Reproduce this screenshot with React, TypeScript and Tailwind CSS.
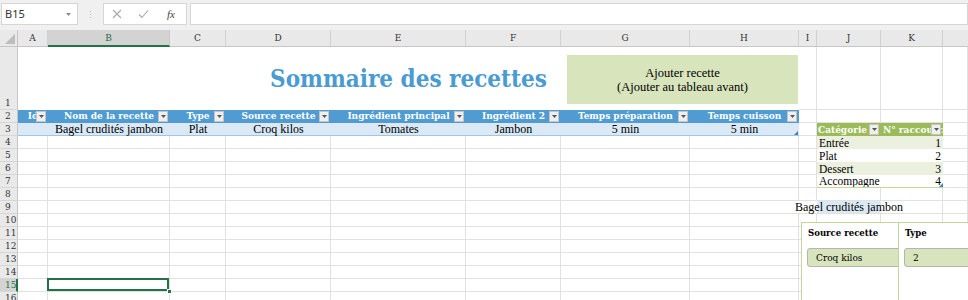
import React from "react";

const SLAB = "font-['DejaVu_Serif_Condensed','DejaVu_Serif',serif]";
const BODY = "font-['Liberation_Serif','Times_New_Roman',serif]";

function FilterBtn() {
  return (
    <div className="absolute right-[2px] top-[1px] flex h-[11px] w-[10px] items-center justify-center border border-[#c4c4c4] bg-[#efefef]">
      <svg width="5" height="3" viewBox="0 0 5 3">
        <path d="M0 0h5L2.5 3z" fill="#555" />
      </svg>
    </div>
  );
}

function RH({ n, active }: { n: number; active?: boolean }) {
  return (
    <div
      className={
        active
          ? `flex items-end pb-[0px] pl-[5px] border-b border-[#d6d6d6] border-r-2 border-r-[#217346] bg-[#d3d3d3] text-[10px] leading-[12px] text-[#217346] ${SLAB}`
          : `flex items-end pb-[0px] pl-[5px] border-b border-[#d6d6d6] border-r border-r-[#c6c6c6] bg-[#e9e9e9] text-[10px] leading-[12px] text-[#333] ${SLAB}`
      }
    >
      {n}
    </div>
  );
}

function C({ className = "", children }: { className?: string; children?: React.ReactNode }) {
  return <div className={"border-r border-b border-[#e1e1e1] " + className}>{children}</div>;
}

function TH({ label }: { label: string }) {
  return (
    <div className={`relative flex items-end justify-center overflow-hidden bg-[#4f9bd2] pb-[1px] text-[10px] font-bold leading-[12px] text-white ${SLAB}`}>
      <span className="whitespace-nowrap">{label}</span>
      <FilterBtn />
    </div>
  );
}

function TD({ label, handle }: { label?: string; handle?: boolean }) {
  return (
    <div className={`relative flex items-end justify-center overflow-visible border-b border-[#9fc5e8] bg-[#dae9f5] text-[12px] leading-[12px] text-black ${BODY}`}>
      <span className="whitespace-nowrap">{label}</span>
      {handle && (
        <svg className="absolute bottom-[0px] right-[1px]" width="4" height="4" viewBox="0 0 4 4">
          <path d="M4 0V4H0z" fill="#3b7fc4" />
        </svg>
      )}
    </div>
  );
}

function Letters() {
  const letters = ["A", "B", "C", "D", "E", "F", "G", "H", "I", "J", "K"];
  return (
    <>
      <div className="relative border-r border-b border-[#c6c6c6] bg-[#e9e9e9]">
        <svg className="absolute bottom-[2px] right-[2px]" width="10" height="10" viewBox="0 0 10 10">
          <path d="M10 0V10H0z" fill="#bdbdbd" />
        </svg>
      </div>
      {letters.map((l) =>
        l === "B" ? (
          <div
            key={l}
            className={`flex items-end justify-center border-r border-[#c9c9c9] border-b-2 border-b-[#217346] bg-[#d3d3d3] pb-[1px] text-[10px] leading-[12px] text-[#1f6a40] ${SLAB}`}
          >
            {l}
          </div>
        ) : (
          <div
            key={l}
            className={`flex items-end justify-center border-r border-[#d0d0d0] border-b border-b-[#c6c6c6] bg-[#e9e9e9] pb-[2px] text-[10px] leading-[12px] text-[#333] ${SLAB}`}
          >
            {l}
          </div>
        )
      )}
      <div className="border-b border-[#c6c6c6] bg-[#e9e9e9]" />
    </>
  );
}

function NormalRow({ n, active }: { n: number; active?: boolean }) {
  return (
    <>
      <RH n={n} active={active} />
      <C />
      {active ? (
        <div className="relative border-r border-b border-[#e1e1e1]">
          <div className="absolute -left-[1px] -top-[1px] -right-[0px] -bottom-[0px] border-2 border-[#217346]" />
          <div className="absolute -bottom-[3px] -right-[3px] h-[5px] w-[5px] border border-white bg-[#217346]" />
        </div>
      ) : (
        <C />
      )}
      <C />
      <C />
      <C />
      <C />
      <C />
      <C />
      <C />
      <C />
      <C />
      <C />
    </>
  );
}

const cats: [string, number][] = [
  ["Entrée", 1],
  ["Plat", 2],
  ["Dessert", 3],
  ["Accompagne", 4],
];

export default function App() {
  return (
    <div className="relative h-[300px] w-[968px] overflow-hidden bg-white">
      {/* Formula bar */}
      <div className="flex h-[30px] items-start gap-0 bg-[#f0f0f0] pt-[3px]">
        <div className="ml-[1px] flex h-[22px] w-[77px] items-center justify-between border border-[#d6d6d6] bg-white pl-[3px] pr-[6px] font-['Noto_Sans','Open_Sans',sans-serif] text-[11px] text-[#333]">
          <span>B15</span>
          <svg width="5" height="3" viewBox="0 0 5 3">
            <path d="M0 0h5L2.5 3z" fill="#8a8a8a" />
          </svg>
        </div>
        <div className="flex h-[22px] w-[25px] flex-col items-center justify-center gap-[2px]">
          <div className="h-[1px] w-[1px] bg-[#b5b5b5]" />
          <div className="h-[1px] w-[1px] bg-[#b5b5b5]" />
          <div className="h-[1px] w-[1px] bg-[#b5b5b5]" />
        </div>
        <div className="flex h-[22px] w-[84px] items-center border border-[#d6d6d6] bg-white">
          <svg className="ml-[8px]" width="10" height="10" viewBox="0 0 10 10">
            <path d="M1 1L9 9M9 1L1 9" stroke="#a9a9a9" strokeWidth="1.1" />
          </svg>
          <svg className="ml-[16px]" width="11" height="10" viewBox="0 0 11 10">
            <path d="M1 5.5L4 8.5L10 1.5" stroke="#a9a9a9" strokeWidth="1.1" fill="none" />
          </svg>
          <span className={`ml-[18px] text-[11px] italic text-[#444] ${BODY}`}>fx</span>
        </div>
        <div className="ml-[3px] h-[22px] flex-1 border border-[#d6d6d6] bg-white" />
      </div>

      {/* Sheet grid */}
      <div className="grid grid-cols-[18px_30px_122px_56px_105px_135px_95px_129px_109px_18px_64px_62px_1fr] grid-rows-[17px_63px_repeat(15,13px)]">
        <Letters />

        {/* Row 1 */}
        <RH n={1} />
        <div className="relative col-span-8 flex items-center justify-center">
          <span className={`pt-[1px] text-[24px] font-bold text-[#4a9bd1] ${SLAB}`}>Sommaire des recettes</span>
          <div className={`absolute left-[549px] top-[8px] flex h-[49px] w-[231px] flex-col items-center justify-center bg-[#d8e4bc] text-[12.5px] leading-[14px] text-black ${BODY}`}>
            <span>Ajouter recette</span>
            <span>(Ajouter au tableau avant)</span>
          </div>
        </div>
        <C />
        <C />
        <C />
        <C />

        {/* Row 2 */}
        <RH n={2} />
        <TH label="Id" />
        <TH label="Nom de la recette" />
        <TH label="Type" />
        <TH label="Source recette" />
        <TH label="Ingrédient principal" />
        <TH label="Ingrédient 2" />
        <TH label="Temps préparation" />
        <TH label="Temps cuisson" />
        <C />
        <C />
        <C />
        <C />

        {/* Row 3 */}
        <RH n={3} />
        <TD />
        <TD label="Bagel crudités jambon" />
        <TD label="Plat" />
        <TD label="Croq kilos" />
        <TD label="Tomates" />
        <TD label="Jambon" />
        <TD label="5 min" />
        <TD label="5 min" handle />
        <C />
        <div className={`relative flex items-end overflow-hidden bg-[#9bbb59] pl-[1px] text-[10px] font-bold leading-[12px] text-white ${SLAB}`}>
          <span className="whitespace-nowrap">Catégorie</span>
          <FilterBtn />
        </div>
        <div className={`relative flex items-end overflow-hidden bg-[#9bbb59] pl-[2px] text-[10px] font-bold leading-[12px] text-white ${SLAB}`}>
          <span className="whitespace-nowrap">N° raccourci</span>
          <FilterBtn />
        </div>
        <C />

        {/* Rows 4-7 */}
        {cats.map(([name, num], i) => (
          <React.Fragment key={name}>
            <RH n={4 + i} />
            <C />
            <C />
            <C />
            <C />
            <C />
            <C />
            <C />
            <C />
            <C />
            <div
              className={
                (i % 2 === 0 ? "bg-[#ebf1de] " : "bg-white ") +
                (i === 3 ? "border-b border-[#c4d79b] " : "") +
                `flex items-end overflow-hidden whitespace-nowrap pl-[2px] text-[11.5px] leading-[12px] text-black ${BODY}`
              }
            >
              {name}
            </div>
            <div
              className={
                (i % 2 === 0 ? "bg-[#ebf1de] " : "bg-white ") +
                (i === 3 ? "border-b border-[#c4d79b] " : "") +
                `relative flex items-end justify-end pr-[2px] text-[11.5px] leading-[12px] text-black ${BODY}`
              }
            >
              {num}
              {i === 3 && (
                <svg className="absolute bottom-[0px] right-[0px]" width="4" height="4" viewBox="0 0 4 4">
                  <path d="M4 0V4H0z" fill="#3b7fc4" />
                </svg>
              )}
            </div>
            <C />
          </React.Fragment>
        ))}

        <NormalRow n={8} />

        {/* Row 9 */}
        <RH n={9} />
        <C />
        <C />
        <C />
        <C />
        <C />
        <C />
        <C />
        <div className="border-b border-[#e1e1e1]" />
        <div className="relative col-span-3 grid grid-cols-[18px_64px_62px] border-b border-[#e1e1e1]">
          <div />
          <div className="bg-[#dbe9f5]" />
          <div className="border-r border-[#e1e1e1]" />
          <span className={`absolute bottom-[0px] left-[50px] -translate-x-1/2 whitespace-nowrap text-[12px] leading-[12px] text-black ${BODY}`}>
            Bagel crudités jambon
          </span>
        </div>
        <C />

        <NormalRow n={10} />
        <NormalRow n={11} />
        <NormalRow n={12} />
        <NormalRow n={13} />
        <NormalRow n={14} />
        <NormalRow n={15} active />
        <NormalRow n={16} />
      </div>

      {/* Slicers */}
      <div className="absolute left-[801px] top-[222px] flex h-[100px] w-[110px] flex-col border border-[#c4d79b] bg-white">
        <div className={`pl-[6px] pt-[4px] text-[9.5px] font-bold leading-[12px] text-black ${SLAB}`}>Source recette</div>
        <div className={`ml-[5px] mt-[9px] flex h-[19px] w-[110px] items-center rounded-[3px] border border-[#b4b4b4] bg-[#d8e4bc] pl-[8px] text-[10px] text-black ${SLAB}`}>
          Croq kilos
        </div>
      </div>
      <div className="absolute left-[898px] top-[222px] flex h-[100px] w-[110px] flex-col border border-[#c4d79b] bg-white">
        <div className={`pl-[6px] pt-[4px] text-[9.5px] font-bold leading-[12px] text-black ${SLAB}`}>Type</div>
        <div className={`ml-[5px] mt-[9px] flex h-[19px] w-[110px] items-center rounded-[3px] border border-[#b4b4b4] bg-[#d8e4bc] pl-[8px] text-[10px] text-black ${SLAB}`}>
          2
        </div>
      </div>
    </div>
  );
}
